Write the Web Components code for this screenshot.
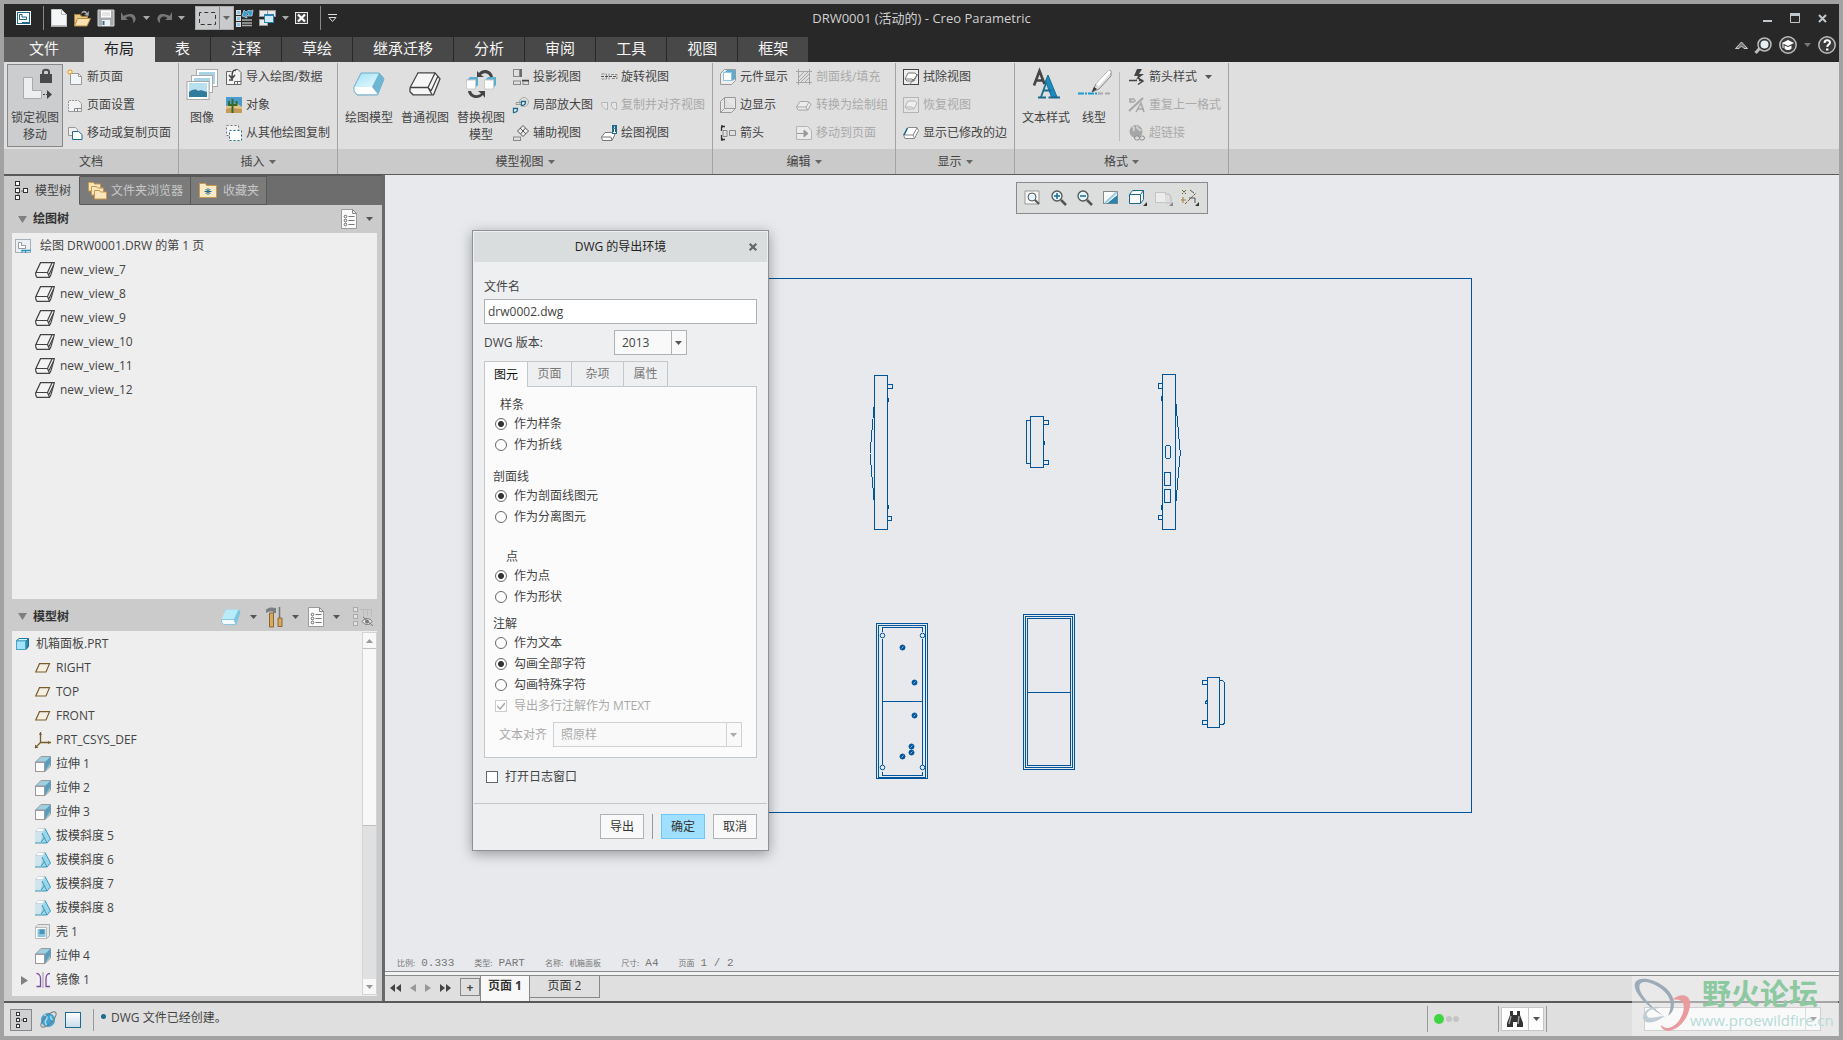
<!DOCTYPE html>
<html lang="zh-CN">
<head>
<meta charset="utf-8">
<title>DRW0001 (活动的) - Creo Parametric</title>
<style>
html,body{height:100%;margin:0}
body{font:12px/16px "Open Sans","Noto Sans CJK SC",sans-serif;color:#444;background:#a2a2a2}
</style>
</head>
<body>
<creo-app></creo-app>
<script>
const BASE = `:host,*{box-sizing:border-box}button{font:inherit;color:inherit;background:none;border:0;padding:0;margin:0;cursor:default}`;

/* name: [width, height, markup] */
const ICONS = {
  caret:[7,4,`<path d="M0 0h7L3.500 4z" fill="currentColor"/>`],
  caretup:[7,4,`<path d="M0 4h7L3.500 0z" fill="currentColor"/>`],
  tri:[9,7,`<path d="M0 0h9L4.500 7z" fill="#808080"/>`],
  triright:[7,9,`<path d="M0 0v9L7 4.500z" fill="#808080"/>`],
  app:[15,14,`<rect width="15" height="14" fill="#fff"/><rect x="1" y="1" width="13" height="12" fill="#1d6a8c"/><rect x="2" y="2" width="11" height="10" fill="#fff"/><path d="M3.500 3.500v5h7v-2.500h-4.500v-2.500z" fill="#fff" stroke="#1d6a8c"/><path d="M6 11.500h8M10 11v2" stroke="#1d6a8c"/>`],
  newdoc:[16,18,`<path d="M.5.500h10l5 5v12H.500z" fill="#f4f6f8" stroke="#c8c8c8"/><path d="M10.500.500v5h5z" fill="#fff" stroke="#bbb"/><path d="M1 17h14" stroke="#888"/>`],
  open:[18,18,`<path d="M1 17V5h6l2 2h6v3" fill="#c79a4c"/><path d="M1.500 16.500V5.500h5l2 2h6V16" fill="#e8c98a" stroke="#a88040"/><path d="M1.500 17l3-7.500h13L14 17z" fill="#fbe2b0" stroke="#b88c48"/><path d="M8 5c1-4 5-4 6-1l2-2-.5 5-4.500-1 2-1c-1-2-3-2-5 0" fill="#aaa"/>`],
  save:[18,18,`<path d="M1 1h16v16H1z" fill="#a8abae" stroke="#d4d4d4"/><rect x="4" y="1.500" width="10" height="7" fill="#fff"/><rect x="5" y="11" width="8" height="6" fill="#eef0f2"/><path d="M6.500 12v4" stroke="#3a7090" stroke-width="2"/><path d="M5 4h8M5 6h8" stroke="#ccc"/>`],
  undo:[16,12,`<path d="M0 0v8h7L4.500 6c4-3 8.500-1 7.500 5l-2 1c7-2 5.500-10-.500-10C6 2 4 3 2.500 4z" fill="#777"/>`],
  redo:[16,12,`<path d="M16 0v8H9l2.500-2C7.500 3 3 5 4 11l2 1C-1 10 .5 2 6.500 2 10 2 12 3 13.500 4z" fill="#777"/>`],
  select:[17,13,`<rect x=".5" y=".5" width="16" height="12" fill="none" stroke="#333" stroke-dasharray="4 2.800" stroke-dashoffset="2"/>`],
  regen:[17,18,`<g fill="#8cc8e8" stroke="#ddd"><rect x=".5" y="1.500" width="4" height="4"/><rect x=".5" y="7.500" width="4" height="4"/><rect x=".5" y="13.500" width="4" height="4"/></g><path d="M6 11h10M6 14h10M6 16.500h10" stroke="#aaa" stroke-width="1.500"/><path d="M6 7l2-6 2 2c2-2 4-2 5-1l2-1-1 6h-5l2-2c-1-1-2 0-3 1l1 3z" fill="#3a9cc8" stroke="#c8e0ec" stroke-width=".7"/>`],
  wins:[17,18,`<g fill="#e8e8e8" stroke="#999"><rect x=".5" y="1.500" width="8" height="6"/><rect x="8.500" y="1.500" width="8" height="6"/><rect x=".5" y="10.500" width="8" height="6"/></g><rect x="5.500" y="5.500" width="9" height="8" fill="#cfe9f6" stroke="#2c84ac"/><path d="M6 6.500h8" stroke="#2c84ac"/>`],
  closew:[13,12,`<rect x=".5" y=".5" width="12" height="11" fill="#444" stroke="#e8e8e8"/><path d="M3 2.500l7 7M10 2.500l-7 7" stroke="#fff" stroke-width="2.200"/>`],
  custom:[9,8,`<path d="M0 .5h9" stroke="#ddd"/><path d="M1 3.500h7L4.500 7.500z" fill="none" stroke="#ddd"/>`],
  min:[9,10,`<path d="M0 8h9" stroke="#c0c8cc" stroke-width="2"/>`],
  max:[10,10,`<path d="M.5 1v8.500h9V1" fill="none" stroke="#c0c8cc"/><path d="M0 1.500h10" stroke="#c0c8cc" stroke-width="3"/>`],
  close:[9,9,`<path d="M1 1l7 7M8 1L1 8" stroke="#c0c8cc" stroke-width="2"/>`],
  chev:[13,9,`<path d="M.5 7.500L6.500 1l6 6.500H9L6.500 5 4 7.500z" fill="#777" stroke="#ccc"/>`],
  search:[17,17,`<path d="M5 11l-4.500 5" stroke="#bbb" stroke-width="3"/><circle cx="9.500" cy="7.500" r="6.500" fill="#333" stroke="#bbb" stroke-width="1.500"/><circle cx="9.500" cy="7.500" r="4" fill="#e4f0f6"/>`],
  hat:[18,18,`<circle cx="9" cy="9" r="8.200" fill="#3c3c3c" stroke="#bbb" stroke-width="1.500"/><path d="M3 7l6-3 6 3-6 3z" fill="#fff"/><path d="M5.500 9.500v3c2 2 5 2 7 0v-3L9 11z" fill="#fff"/><path d="M4 7v5" stroke="#fff"/>`],
  help:[18,18,`<circle cx="9" cy="9" r="8.200" fill="#3c3c3c" stroke="#bbb" stroke-width="1.500"/><path d="M6.500 7c0-3.500 5.500-3.500 5.500-.5C12 8.500 9.200 8.500 9.200 11" fill="none" stroke="#fff" stroke-width="2"/><path d="M8 12.500h2.400v2H8z" fill="#fff"/>`],
  lock:[32,32,`<path d="M4.500 9.500h9v13h9v8h-18z" fill="#eceeef" stroke="#aaa"/><path d="M24 26.500h5" stroke="#444" stroke-dasharray="2 1"/><path d="M28 22l5 4.500-5 4.500z" fill="#444"/><rect x="21" y="6" width="12" height="9" fill="#4a4a4a"/><path d="M24 6V4c0-3 6-3 6 0v2" fill="none" stroke="#4a4a4a" stroke-width="2"/>`],
  newpage:[16,16,`<path d="M3.500 4.500h8l3 3v8h-11z" fill="#f2f5f8" stroke="#999"/><path d="M11.500 4.500v3h3z" fill="#fff" stroke="#999"/><path d="M3 0v6M0 3h6M1 1l4 4M5 1L1 5" stroke="#f0961e"/><circle cx="3" cy="3" r="1.200" fill="#fff3b0"/>`],
  pagesetup:[16,16,`<path d="M1.500 3.500h10l3 3v8h-13z" fill="#f0f2f4" stroke="#999"/><path d="M1.500 3v12M1 3.500h10" stroke="#dfdfdf" stroke-dasharray="1 2"/><path d="M7.500 14.500v-3h7M10.500 12v3" fill="none" stroke="#888"/>`],
  movepage:[16,16,`<path d="M1.500 2.500h7l2 2v6h-9z" fill="#eee" stroke="#999"/><path d="M5.500 6.500h6l3.500 3v5H5.500z" fill="#fff" stroke="#1d6a8c"/>`],
  images:[33,32,`<g stroke="#aaa" fill="#fff"><rect x="10.500" y="1.500" width="21" height="17"/><rect x="13" y="4" width="16" height="12" fill="#a9d2e4" stroke="none"/><rect x="5.500" y="7.500" width="21" height="17"/><rect x="8" y="10" width="16" height="12" fill="#a9d2e4" stroke="none"/><rect x="1" y="13.500" width="22" height="18"/></g><rect x="3" y="15" width="18" height="14" fill="#b9e0ee"/><path d="M3 24c4-3 7-3 9-1 3-2 6 0 9 1v5H3z" fill="#2f7c9c"/>`],
  importd:[16,16,`<path d="M.5 2.500h5M9 .5h3l3 3v12H.500v-13" fill="#f3f3f3" stroke="#666"/><path d="M10 1.500c-3-1-4 1-4 7M3 6l3 3.500L9 6M3 11h4" fill="none" stroke="#444" stroke-width="1.500"/><path d="M8.500 15v-2.500H15M11.500 13v2" fill="none" stroke="#666"/>`],
  object:[16,16,`<rect width="16" height="16" fill="#4a9ccc"/><path d="M0 9l6-1 4-2 6 4v6H0z" fill="#e2c48a"/><path d="M0 12c5-2 10 0 16 0v4H0z" fill="#c49a58"/><path d="M6.500 2v14M3 4v4h3M10.500 4v4H7" fill="none" stroke="#356a2c" stroke-width="2"/>`],
  copyfrom:[16,16,`<rect x=".5" y=".5" width="12" height="10" fill="#f3f3f3" stroke="#777" stroke-dasharray="2 2"/><rect x="3.500" y="5.500" width="12" height="10" fill="#fff" stroke="#1d6a8c" stroke-dasharray="2 2"/>`],
  cube:[32,24,`<defs><linearGradient id="a" x2="1" y2="1"><stop stop-color="#9fe0f4"/><stop offset="1" stop-color="#e8faff"/></linearGradient></defs><path d="M8 1h18L19 15H1z" fill="url(#a)"/><path d="M26 1l5 5-6 16-6-7z" fill="#6fb6d4"/><path d="M1 15h18l5 7H4l-3-3z" fill="#fff"/><path d="M8 1h18l5 6-6.500 16H4l-3-4v-4z" fill="none" stroke="#6aaccb"/>`],
  wirecube:[32,24,`<path d="M9 .8h17l5 6-6.500 16H4l-3-3v-4z" fill="#f6f6f6" stroke="#444" stroke-width="1.300"/><path d="M1 15.500h18l4 7M19 15.500L26 1M22 19L29 4M19 15.500l3 3.500" fill="none" stroke="#444" stroke-width="1.300"/>`],
  replace:[32,32,`<path d="M28 9C27 1 17 0 14 5l-2-2v6h7l-3-2c3-3 8-2 9 2zM3 23c1 8 11 9 15 4l2 3v-7h-7l3 2.500c-3 3-9 2-10-2.500z" fill="#444"/><path d="M2 12l3-3h8v8l-3 3H2z" fill="#5cacd0"/><rect x="1.500" y="12" width="9" height="9" fill="#fff" stroke="#ccc"/><path d="M20 12l3-3h8v8l-3 3h-8z" fill="#5cacd0"/><rect x="19.500" y="12" width="9" height="9" fill="#fff" stroke="#ccc"/>`],
  proj:[16,16,`<g fill="none" stroke="#888"><rect x=".5" y=".5" width="6" height="7"/><rect x=".5" y="12" width="7" height="3.500"/><rect x="10" y="12" width="5.500" height="3.500"/></g><path d="M8 0v8M9 11.500h7" stroke="#444" stroke-width="1.500"/>`],
  detail:[16,16,`<circle cx="11" cy="5" r="4.500" fill="none" stroke="#aaa"/><path d="M3 5.500h8v2H3z" fill="none" stroke="#999"/><path d="M8.500 4.500h4c0 3-2 4-4 4zM.5 11.500h4c0 3-2 4-4 4z" fill="#fff" stroke="#1d6a8c" stroke-width="1.300"/>`],
  aux:[16,16,`<path d="M10 .5l5.500 5.500L10 11.500 4.500 6z" fill="#eee" stroke="#555"/><path d="M7 3l6 6M12.500 3l-5 6" stroke="#555"/><rect x=".5" y="12" width="7" height="3.500" fill="none" stroke="#888"/>`],
  rot:[16,16,`<path d="M0 7.500h16" stroke="#555" stroke-dasharray="3 1"/><path d="M.5 5h5v5h-5M8 4.500v6M10 5.500h6v4h-6" fill="none" stroke="#888" stroke-dasharray="3 1"/>`],
  copyalign:[16,16,`<path d="M.5 5.500h6v7c-3 0-6-3-6-7zM15.500 5.500h-5v3c1 3 3 4 5 4z" fill="#e8e8e8" stroke="#aaa"/>`],
  drwview:[16,16,`<path d="M4 7.500h7l3 2-3 6H1.500L.5 12z" fill="#fff" stroke="#777"/><path d="M1 12h9l1 3" fill="none" stroke="#777"/><rect x="11" y="0" width="5" height="9" fill="#1d6a8c"/><path d="M13.500 1.500v1.300M12.500 4h1v3.500M12 7.500h3" stroke="#fff"/>`],
  comp:[16,16,`<path d="M.5 4.500l4-4h11v11l-4 4H.5z" fill="#eee" stroke="#999"/><path d="M4 4l3-3h8v9l-3 2z" fill="#5cacd0"/><rect x="3.500" y="3.500" width="8" height="8" fill="#fff" stroke="#8cc8e0"/>`],
  edge:[16,16,`<path d="M.5 4.500l4-4h11v11l-4 4H.500zM4.500 1v10.500h11M4.500 11.500l-4 4" fill="#e6e6e6" stroke="#999"/>`],
  arr:[16,16,`<path d="M5 1.500H1M1 14.500h4M2 0v3M2 13v3M1.500 2v4M1.500 10v5" stroke="#333" stroke-width="1.300"/><path d="M3 5.500h4v6H3zM9.500 5.500h6v5h-6z" fill="none" stroke="#888"/>`],
  hatch:[16,16,`<path d="M2.500 0v16M13.500 0v16M0 2.500h16M0 13.500h16M3 8l5-5M3 12l9-9M5 13l8-8M9 13l4-4" fill="none" stroke="#999"/>`],
  todraft:[16,16,`<path d="M4 4.500h8l3 2.500-3 6H2L.5 10z" fill="#f0f0f0" stroke="#999"/><path d="M1 10h9l1.500 3M10 10l3-5" fill="none" stroke="#999"/>`],
  topage:[16,16,`<path d="M.5 1.500h11l4 4v9H.5z" fill="#eee" stroke="#aaa"/><path d="M1 8.500h8M8 5l4 3.500L8 12z" stroke="#888" fill="#888"/>`],
  erase:[16,16,`<rect x=".5" y=".5" width="15" height="15" fill="#eee" stroke="#444"/><path d="M5 4h7l2 2-3 6H4l-2-2z" fill="#fff" stroke="#777"/><path d="M2 10h7l2 2M6 16L16 4" fill="none" stroke="#777"/>`],
  resume:[16,16,`<rect x=".5" y=".5" width="15" height="15" fill="#e6e6e6" stroke="#aaa"/><path d="M5 4h7l2 2-3 6H4l-2-2z" fill="#f4f4f4" stroke="#aaa"/><path d="M2 10h7l2 2" fill="none" stroke="#aaa"/>`],
  showedge:[16,16,`<path d="M5 2.500h9l1.500 3-4 8H2L.5 10z" fill="#fff" stroke="#888"/><path d="M1 10h9l1.500 3M10 10l4-7" fill="none" stroke="#888"/><path d="M4.500 3l-3.500 7" stroke="#1d6a8c" stroke-width="1.500"/>`],
  aa:[32,32,`<path d="M4 17.500L9.500 3l5 13M6 12.500h7" fill="none" stroke="#444" stroke-width="2.600"/><path d="M11 29L17.500 11" stroke="#1b6a90" stroke-width="1.800"/><path d="M18 7l9 22h-5.500L15.500 13z" fill="#1b8cc0" stroke="#1b6a90"/><path d="M8 29.500h8M18.500 29.500H30M13.500 22.500h8" stroke="#1b6a90" stroke-width="2"/>`],
  pen:[33,32,`<path d="M14 24l4-8L31 2l2 1v5L21 21z" fill="#ddd" stroke="#888"/><path d="M18 16L31 2l2 2-12 14z" fill="#fff"/><path d="M14 24l2-5 3 2z" fill="#333"/><path d="M0 25.500h21" stroke="#1b9ad0" stroke-width="2" stroke-dasharray="6 1 2 1"/><path d="M20 25.500h13" stroke="#aaa" stroke-width="2" stroke-dasharray="5 2"/>`],
  arrstyle:[16,16,`<path d="M8 0h5l-3 5h5l-8 6 2-4H5z" fill="#444"/><path d="M0 11.500h8M9 9l5 3-5 3.500M10 11.500h4" fill="none" stroke="#444" stroke-width="1.500"/>`],
  repfmt:[16,16,`<path d="M0 14L14 1" stroke="#999" stroke-width="2"/><path d="M1 1v4h4M1 4c3-4 5-2 5 1M7 15l5-9 3 9M8 12h7" fill="none" stroke="#999" stroke-width="1.500"/>`],
  link:[16,16,`<circle cx="7" cy="6.500" r="6.500" fill="#999"/><path d="M3 2c3 0 2 3 1 4M8 1c-1 3 3 3 4 5" stroke="#ccc" stroke-width="2" fill="none"/><rect x="5.500" y="11" width="5" height="4" rx="2" fill="#ddd" stroke="#777"/><rect x="10.500" y="11" width="5" height="4" rx="2" fill="#ddd" stroke="#777"/>`],
  tree:[14,20,`<path d="M3 3v14M3 10h8" stroke="#666" stroke-dasharray="2 1"/><g fill="#fff" stroke="#333"><rect x=".5" y=".5" width="4" height="4"/><rect x=".5" y="7.500" width="4" height="4"/><rect x=".5" y="14.500" width="4" height="4"/><rect x="8.500" y="7.500" width="4" height="4"/></g>`],
  treesm:[11,16,`<path d="M2 2v12M2 8h7" stroke="#666" stroke-dasharray="2 1"/><g fill="#fff" stroke="#333"><rect x=".5" y=".5" width="3" height="3"/><rect x=".5" y="6.500" width="3" height="3"/><rect x=".5" y="12.500" width="3" height="3"/><rect x="7.500" y="6.500" width="3" height="3"/></g>`],
  folders:[19,19,`<g fill="#fae6bc" stroke="#c9984c"><path d="M.5 10V1.500h5l1 1.500h6v7z"/><path d="M3.500 14V5.500h5l1 1.500h6v7z"/><path d="M6.500 18V9.500h5l1 1.500h6v7z"/></g>`],
  fav:[18,15,`<path d="M.5 14.500v-14h6l1 2h10v12z" fill="#fbeac6" stroke="#c9984c"/><path d="M9 5v7M5.500 8.500h7M6.500 6l5 5M11.500 6l-5 5" stroke="#1d6a8c"/>`],
  listdoc:[16,20,`<path d="M.5.500h11l4 4v15H.500z" fill="#fafafa" stroke="#9a9a9a"/><path d="M11.500.500v4h4z" fill="#eee" stroke="#888"/><g fill="#fff" stroke="#666"><circle cx="4.500" cy="7.500" r="1.300"/><circle cx="4.500" cy="11.500" r="1.300"/><circle cx="4.500" cy="15.500" r="1.300"/></g><path d="M7.500 7.500h6M7.500 11.500h6M7.500 15.500h6" stroke="#777"/>`],
  bluecube:[20,16,`<path d="M5 .5h12.500l2 2.500-4 12.500H2.500L.500 12z" fill="#7cc6e2"/><path d="M5 .5h12.500L13 10H.500z" fill="#b8ecfa"/><path d="M.5 10.500H13l2 5H2.500L.500 13z" fill="#f4fcff" stroke="#8cc8de"/>`],
  tools:[17,20,`<path d="M0 2.500C3 0 6 0 10 1v5H7V4.500H3L0 6z" fill="#7c7f82"/><path d="M3.500 6h4v14h-4z" fill="#d9a95c" stroke="#8c6630"/><path d="M13.500 0v11" stroke="#777" stroke-width="1.500"/><path d="M12 11h4v8.500h-4z" fill="#d9a95c" stroke="#8c6630"/>`],
  treehide:[24,20,`<g fill="#e2e2e2" stroke="#aaa"><rect x="4.500" y=".5" width="4" height="4"/><rect x="4.500" y="7.500" width="4" height="4"/><rect x="4.500" y="14.500" width="4" height="4"/></g><path d="M11 2.500h12M14.500 2v9M18.500 2v7M22.500 2v8" stroke="#bbb"/><path d="M13 14.500c3-4 8-4 10 0-2 4-7 4-10 0z" fill="#e6e6e6" stroke="#777"/><circle cx="18" cy="14.500" r="2" fill="#777"/><path d="M14 10l10 9" stroke="#777"/>`],
  drwroot:[20,15,`<rect x=".5" y=".5" width="15" height="13" fill="#e8f0f6" stroke="#a8b0b8"/><path d="M3.500 3.500v6h7v-3h-4v-3z" fill="#fff" stroke="#999"/><path d="M7 13.500v-2h9M10.500 12v2" fill="none" stroke="#2c94c4" stroke-width="1.300"/>`],
  view:[20,16,`<path d="M5.500.700h13.800L16 12.500 14.500 15.300H2L.7 13V11z" fill="#f4f4f4" stroke="#444" stroke-width="1.200"/><path d="M.7 10.500h11.800l2 4.800M12.500 10.500L17 .7M14 12.500l4.500-9" fill="none" stroke="#444" stroke-width="1.200"/>`],
  part:[16,12,`<path d="M1.500 3l2.500-2.500h9.500v8L11 11.500z" fill="#2c8cb4" stroke="#1d6a8c"/><path d="M1.500 3L4 .5h9.500L11 3z" fill="#d8f4fc" stroke="#1d7ca4"/><rect x="1.500" y="3" width="9" height="8.500" fill="#a4e4f8" stroke="#4aa4c8"/>`],
  plane:[16,10,`<path d="M4.500.700h10L11 9H.800z" fill="#f6f0e4" stroke="#7a5c2c" stroke-width="1.200"/>`],
  csys:[16,16,`<path d="M5.500 0v10.500H16M5.500 10.500L0 16" fill="none" stroke="#7a5c2c" stroke-width="1.300"/><path d="M4 3l1.500-3L7 3zM13 9l3 1.500-3 1.500zM0 12.500V16h3.500z" fill="#7a5c2c"/>`],
  extrude:[16,16,`<path d="M.5 6L6 .5h9.500v9.500L10 15.500V6z" fill="#9cd0e4" stroke="#999"/><path d="M10 6L15.500.5V7L10 15z" fill="#5a9cbc"/><rect x=".5" y="6.500" width="9" height="9" fill="#fdfdfd" stroke="#999"/>`],
  draft:[16,16,`<path d="M0 3.500L3.500.500H10L7 3.500z" fill="#fff" stroke="#b4c8d0" stroke-width=".7"/><path d="M0 4h7v11H0z" fill="#cfe4ec"/><path d="M7 5l3-4.500L15.500 11 12 15H6z" fill="#9cd8ec"/><path d="M7 5l5 10M10 .5L15.500 11 12 15" stroke="#3c94b8" fill="none"/><path d="M6 14l4-5M0 15h12" stroke="#3c94b8" fill="none"/>`],
  shell:[16,16,`<path d="M.5 3L3 .5h11.500v11L12 14.500H.500z" fill="#e4e8ea" stroke="#aaa"/><rect x=".5" y="3.500" width="11" height="11" fill="#fff" stroke="#bbb"/><rect x="2.500" y="5" width="8" height="8" fill="#8cc8e0"/><rect x="4.500" y="5.500" width="5" height="4.500" fill="#4a94b8"/>`],
  mirror:[16,16,`<path d="M8 0v16" stroke="#999"/><path d="M1.500 1.500c3 0 4 3 4 5v8h-4M15 1.500c-3 0-4 3-4 5v8h4" fill="#f4f0fa" stroke="#7c4a9c" stroke-width="1.300"/>`],
  zfit:[18,18,`<path d="M0 2h14v13H0z" fill="#f6f6f6" stroke="#999"/><circle cx="7" cy="8" r="4" fill="#e4f4fc" stroke="#555"/><path d="M10 11l4 4" stroke="#555" stroke-width="2"/>`],
  zin:[18,18,`<circle cx="6" cy="7" r="5" fill="#e4f4fc" stroke="#555" stroke-width="1.300"/><path d="M10 11l5 5" stroke="#555" stroke-width="2.500"/><path d="M3 7h6M6 4v6" stroke="#1d6a8c" stroke-width="1.500"/>`],
  zout:[18,18,`<circle cx="6" cy="7" r="5" fill="#e4f4fc" stroke="#555" stroke-width="1.300"/><path d="M10 11l5 5" stroke="#555" stroke-width="2.500"/><path d="M3 7h6" stroke="#1d6a8c" stroke-width="1.500"/>`],
  repaint:[18,18,`<rect x="0.500" y="2.500" width="14" height="12" fill="#f8fafc" stroke="#888"/><path d="M14.500 6v8.500H4z" fill="#2c84ac"/><path d="M2 14L14 3" stroke="#9ccbe0" stroke-width="2"/>`],
  dispcube:[18,18,`<path d="M.5 5.500l3-4h11v9l-3 4H.500z" fill="#fff" stroke="#1d6a8c"/><path d="M.5 5.500h11v9M11.500 5.500l3-4" fill="none" stroke="#1d6a8c"/><path d="M18 13v4h-4z" fill="#333"/>`],
  dispgray:[18,18,`<rect x=".5" y="3.500" width="10" height="10" fill="#ececec" stroke="#c4c4c4"/><path d="M10 5h4l2 3v6h-6" fill="#ddd" stroke="#bbb"/><path d="M18 13v4h-4z" fill="#888"/>`],
  datum:[18,18,`<path d="M1 1l4 4M5 1L1 5M4 15L15 4" stroke="#7a5c2c" stroke-dasharray="3 1"/><path d="M9 1l4 3M8 9h6v5" fill="none" stroke="#555"/><path d="M2 8v6M0 11h5" stroke="#a07c3c"/><path d="M18 13v4h-4z" fill="#333"/>`],
  navfirst:[11,8,`<path d="M5 0v8L0 4zM11 0v8L6 4z" fill="#444"/>`],
  navprev:[6,8,`<path d="M6 0v8L0 4z" fill="#999"/>`],
  navnext:[6,8,`<path d="M0 0v8l6-4z" fill="#999"/>`],
  navlast:[11,8,`<path d="M0 0v8l5-4zM6 0v8l5-4z" fill="#444"/>`],
  globe:[17,17,`<circle cx="8" cy="9" r="7" fill="#3ca4d4"/><path d="M4 4c3 0 4 3 2 5s0 4 1 6M11 5c-1 2 1 4 3 4" stroke="#a4dcf2" stroke-width="1.500" fill="none"/><ellipse cx="8.500" cy="8.500" rx="10" ry="4" transform="rotate(-45 8.500 8.500)" fill="none" stroke="#777"/>`],
  square:[16,16,`<defs><linearGradient id="s" x2="0" y2="1"><stop stop-color="#fff"/><stop offset="1" stop-color="#c8dce8"/></linearGradient></defs><rect x=".5" y=".5" width="15" height="15" fill="url(#s)" stroke="#1d6a8c"/>`],
  binoc:[16,16,`<path d="M3 0h3v4h4V0h3v4l3 8v4h-6v-5H6v5H0v-4l3-8z" fill="#333"/><path d="M4 5l-2 8M12 5l-1 8" stroke="#999" stroke-width="1.500"/>`],
  dlgclose:[8,8,`<path d="M.7.700l6.600 6.600M7.300.700L.700 7.300" stroke="#666" stroke-width="2.200"/>`]
};

const def = (tag, css, html) => customElements.define(tag, class extends HTMLElement {
  constructor(){ super(); this.attachShadow({mode:'open'}); }
  connectedCallback(){
    const h = typeof html === 'function' ? html(this) : html;
    this.shadowRoot.innerHTML = `<style>${BASE}${css}</style>${h}`;
  }
});
const ic = n => `<cx-icon name="${n}"></cx-icon>`;

def('cx-icon', `:host{display:block;flex:none}svg{display:block;overflow:visible}`, el => {
  const [w,h,m] = ICONS[el.getAttribute('name')];
  return `<svg width="${w}" height="${h}" viewBox="0 0 ${w} ${h}" aria-hidden="true">${m}</svg>`;
});

def('title-bar', `
:host{display:grid;grid-template-columns:1fr auto 1fr;align-items:center;height:33px;padding-bottom:5px;background:#282828;color:#d0d0d0}
.quick{display:flex;align-items:center;gap:6px;padding-left:12px;height:24px}
.quick button{display:block;color:#aaa}
.sep{width:1px;height:24px;background:#888;margin:0 1px 0 6px}
.split{display:flex;height:24px;background:#c8cacc;border:1px solid #aaa;align-items:center;margin:0 -4px 0 4px}
.split button{height:22px;display:grid;place-items:center;padding:0 3px;color:#666}
.split button+button{border-left:1px solid #888}
h1{font-size:13px;font-weight:400;line-height:20px;margin:0}
.win{display:flex;justify-content:flex-end;align-items:center;gap:18px;padding-right:12px}
`, `<div class="quick"><button aria-label="Creo">${ic('app')}</button><span class="sep"></span>
<button aria-label="新建">${ic('newdoc')}</button><button aria-label="打开">${ic('open')}</button><button aria-label="保存">${ic('save')}</button>
<button aria-label="撤消">${ic('undo')}</button><button aria-label="撤消列表">${ic('caret')}</button><button aria-label="重做">${ic('redo')}</button><button aria-label="重做列表">${ic('caret')}</button>
<span class="split"><button aria-label="选择">${ic('select')}</button><button aria-label="选择列表">${ic('caret')}</button></span>
<button aria-label="重新生成">${ic('regen')}</button><button aria-label="窗口">${ic('wins')}</button><button aria-label="窗口列表">${ic('caret')}</button><button aria-label="关闭窗口">${ic('closew')}</button><span class="sep"></span><button aria-label="自定义">${ic('custom')}</button></div>
<h1>DRW0001 (活动的) - Creo Parametric</h1>
<div class="win"><button aria-label="最小化">${ic('min')}</button><button aria-label="最大化">${ic('max')}</button><button aria-label="关闭">${ic('close')}</button></div>`);

def('ribbon-tabs', `
:host{display:flex;height:25px;background:#282828;justify-content:space-between}
nav{display:flex}
nav button{font-size:15px;line-height:22px;color:#f4f4f4;background:#484848;padding:0 20px 3px;border-right:1px solid #282828}
nav .file{background:#636363;padding:0 25px 3px;border:0}
nav .on{background:#dfdfdf;color:#222;border-color:#dfdfdf}
.tools{display:flex;align-items:center;gap:7px;padding:0 3px 9px 0;color:#777}
`, `<nav><button class="file">文件</button><button class="on">布局</button>${['表','注释','草绘','继承迁移','分析','审阅','工具','视图','框架'].map(t=>`<button>${t}</button>`).join('')}</nav>
<div class="tools"><button aria-label="折叠功能区">${ic('chev')}</button><button aria-label="搜索">${ic('search')}</button><button aria-label="学习">${ic('hat')}</button>${ic('caret')}<button aria-label="帮助">${ic('help')}</button></div>`);

def('ribbon-button', `
:host{display:block}
button{display:flex;align-items:center;gap:4px;height:28px;white-space:nowrap;line-height:16px}
button cx-icon{width:16px}
:host([off]) button{color:#aaa}
:host([off]) cx-icon{opacity:.8}
.m{margin-left:4px;color:#555;width:7px}
:host([big]) button{flex-direction:column;gap:0;width:56px;height:83px;margin-top:1px;padding-top:3px;border:1px solid transparent;line-height:17px;text-align:center}
:host([big]) .i{width:auto;height:32px;display:grid;place-items:center;margin-bottom:9px}
:host([big]) cx-icon{width:auto}
:host([narrow]) button{width:40px}
:host([pressed]) button{background:#cbcdcf;border-color:#888}
`, el => `<button><span class="i">${ic(el.getAttribute('icon'))}</span><span>${el.getAttribute('label').replace('|','<br>')}</span>${el.hasAttribute('menu')?`<cx-icon class="m" name="caret"></cx-icon>`:''}</button>`);

def('ribbon-group', `
:host{display:flex;flex-direction:column;border-right:1px solid #a3a3a3}
.body{display:flex;padding:0 3px;height:86px}
footer{height:25px;background:#cacaca;display:flex;justify-content:center;align-items:center;gap:4px;color:#444}
footer cx-icon{color:#666}
::slotted(.col){margin:0 4px;flex:none}
::slotted(.rule){width:1px;background:#bbb;margin:9px 5px 8px}
`, el => `<div class="body"><slot></slot></div><footer><span>${el.getAttribute('label')}</span>${el.hasAttribute('menu')?ic('caret'):''}</footer>`);

const rb = (i,l,a='') => `<ribbon-button icon="${i}" label="${l}" ${a}></ribbon-button>`;
def('cx-ribbon', `
:host{display:flex;height:113px;padding-top:1px;background:linear-gradient(#dfdfdf 87px,#cacaca 87px);border-bottom:1px solid #595959}
`, `
<ribbon-group label="文档">${rb('lock','锁定视图|移动','big pressed')}<div class="col">${rb('newpage','新页面')}${rb('pagesetup','页面设置')}${rb('movepage','移动或复制页面')}</div></ribbon-group>
<ribbon-group label="插入" menu>${rb('images','图像','big narrow')}<div class="col">${rb('importd','导入绘图/数据')}${rb('object','对象')}${rb('copyfrom','从其他绘图复制')}</div></ribbon-group>
<ribbon-group label="模型视图" menu>${rb('cube','绘图模型','big')}${rb('wirecube','普通视图','big')}${rb('replace','替换视图|模型','big')}<div class="col">${rb('proj','投影视图')}${rb('detail','局部放大图')}${rb('aux','辅助视图')}</div><div class="col">${rb('rot','旋转视图')}${rb('copyalign','复制并对齐视图','off')}${rb('drwview','绘图视图')}</div></ribbon-group>
<ribbon-group label="编辑" menu><div class="col">${rb('comp','元件显示')}${rb('edge','边显示')}${rb('arr','箭头')}</div><div class="col">${rb('hatch','剖面线/填充','off')}${rb('todraft','转换为绘制组','off')}${rb('topage','移动到页面','off')}</div></ribbon-group>
<ribbon-group label="显示" menu><div class="col">${rb('erase','拭除视图')}${rb('resume','恢复视图','off')}${rb('showedge','显示已修改的边')}</div></ribbon-group>
<ribbon-group label="格式" menu>${rb('aa','文本样式','big')}${rb('pen','线型','big narrow')}<div class="rule"></div><div class="col">${rb('arrstyle','箭头样式','menu')}${rb('repfmt','重复上一格式','off')}${rb('link','超链接','off')}</div></ribbon-group>`);

def('tree-item', `
:host{display:flex;align-items:center;height:24px;padding-left:3px;gap:5px}
:host([sub]){padding-left:23px}
:host([open]){padding-left:9px;gap:7px}
:host([open]) .l{margin-left:-2px}
`, el => `${el.hasAttribute('open')?ic('triright'):''}${ic(el.getAttribute('icon'))}<span class="l"><slot></slot></span>`);

def('tree-section', `
:host{display:flex;flex-direction:column;min-height:0}
header{display:flex;align-items:center;gap:9px;height:28px;padding:0 9px 0 14px;color:#555}
:host([scroll]) header{height:32px;padding-top:3px}
h2{font-size:12px;line-height:16px;color:#333;margin:0 auto 0 -3px}
.box{flex:1;margin:0 5px 0 8px;background:#eee;display:flex;min-height:0;overflow:hidden}
.items{flex:1;padding-top:1px}
.bar{width:15px;background:#dfe0e2;display:flex;flex-direction:column;border:1px solid #d4d4d4;margin:1px 0}
.bar button{height:15px;background:#f8f8f8;display:grid;place-items:center;color:#999}
.thumb{height:178px;background:#f8f8f8;border:1px solid #c0c0c0;border-width:1px 0}
.fill{flex:1}
`, el => `<header>${ic('tri')}<h2>${el.getAttribute('label')}</h2><slot name="tools"></slot></header><div class="box"><div class="items" role="tree"><slot></slot></div>${el.hasAttribute('scroll')?`<div class="bar"><button aria-label="向上">${ic('caretup')}</button><div class="thumb"></div><div class="fill"></div><button aria-label="向下">${ic('caret')}</button></div>`:''}</div>`);

const ti = (i,l,a='sub') => `<tree-item role="treeitem" icon="${i}" ${a}>${l}</tree-item>`;
def('side-panel', `
:host{display:flex;flex-direction:column;width:381px;background:#cbcbcb;border-right:3px solid #6a6a6a;padding-bottom:5px}
nav{display:flex;height:30px;background:#6d6d6d;border-top:1px solid #595959}
nav button{display:flex;align-items:center;color:#c8c8c8;background:#7b7b7b;border:1px solid #595959;border-width:1px 1px 1px 0;gap:4px;padding:0 7px 0 8px}
nav .on{background:#cbcbcb;color:#444;border-color:#cbcbcb #595959 #cbcbcb #cbcbcb;gap:6px;padding:0 8px 0 11px}
nav .fav{gap:6px}
.top{height:394px}
.bot{flex:1}
`, `<nav><button class="on">${ic('tree')}模型树</button><button>${ic('folders')}文件夹浏览器</button><button class="fav">${ic('fav')}收藏夹</button></nav>
<tree-section class="top" label="绘图树"><cx-icon slot="tools" name="listdoc"></cx-icon><cx-icon slot="tools" name="caret"></cx-icon>
${ti('drwroot','绘图 DRW0001.DRW 的第 1 页','')}${[7,8,9,10,11,12].map(n=>ti('view','new_view_'+n)).join('')}</tree-section>
<tree-section class="bot" label="模型树" scroll>${['bluecube','caret','tools','caret','listdoc','caret','treehide'].map(n=>`<cx-icon slot="tools" name="${n}"></cx-icon>`).join('')}
${ti('part','机箱面板.PRT','')}${ti('plane','RIGHT')}${ti('plane','TOP')}${ti('plane','FRONT')}${ti('csys','PRT_CSYS_DEF')}${ti('extrude','拉伸 1')}${ti('extrude','拉伸 2')}${ti('extrude','拉伸 3')}${[5,6,7,8].map(n=>ti('draft','拔模斜度 '+n)).join('')}${ti('shell','壳 1')}${ti('extrude','拉伸 4')}${ti('mirror','镜像 1','open')}</tree-section>`);

const screw = (x,y) => `<circle cx="${x}" cy="${y}" r="2.500" fill="#00549c"/><path d="M${x-1} ${y+1}l2-2" stroke="#c8d8ea" stroke-width=".8"/>`;
const ring = (x,y) => `<circle cx="${x}" cy="${y}" r="2.300"/>`;
def('drawing-canvas', `
:host{display:block;position:relative;flex:1;background:#e8e9ed;overflow:hidden;min-height:0}
svg.d{position:absolute;left:0;top:0;width:100%;height:100%}
.view{position:absolute;left:631px;top:7px;display:flex;align-items:center;gap:8px;height:32px;padding:0 8px;background:#dcdddd;border:1px solid #8a8a8a}
.view button{display:block}
p{position:absolute;left:12px;bottom:0;margin:0;display:flex;gap:20px;font:11px/16px "Liberation Mono",monospace;color:#777}
p span{display:flex;gap:6px;align-items:center}
p i{font:8px/16px "Noto Sans CJK SC",sans-serif}
`, `<svg class="d" role="img" aria-label="工程图"><g transform="translate(-384.500 -174.500)" fill="none" stroke="#00549c" shape-rendering="crispEdges">
<rect x="600" y="278" width="871" height="534"/>
<rect x="874" y="375" width="13" height="154"/><path d="M887 384h5v4h-5M887 516h4v4h-4M888 397v4M888 504v4"/><path d="M873 406v11M872 418v11M871 429v12M870 441v11M869 452h1M870 453v11M871 464v12M872 476v11M873 487v12"/>
<rect x="1030" y="416" width="13" height="51"/><path d="M1030 420h-4v43h4M1043 420h5v4h-5M1043 460h5v4h-5M1044 440v4"/>
<rect x="1162" y="374" width="13" height="155"/><path d="M1162 383h-4v5h4M1162 515h-4v4h4M1161 395v5M1161 504v5M1176 403v12M1177 415v11M1178 426v12M1179 438v11M1180 449v6M1179 455v11M1178 466v11M1177 477v12M1176 489v11"/>
<rect x="1165" y="445" width="5" height="13" rx="2"/><rect x="1164" y="472" width="6" height="13" rx="1"/><rect x="1164" y="489" width="6" height="13" rx="1"/>
<rect x="876" y="623" width="51" height="155"/><rect x="878" y="625" width="47" height="152"/><path d="M882 701h40M882 631v-4h40v4M882 638v126M922 638v126M882 771v4h40v-4"/>
<g shape-rendering="auto">${ring(882,635)}${ring(922,635)}${ring(882,767)}${ring(922,767)}${screw(902,647)}${screw(914,682)}${screw(914,715)}${screw(911,746)}${screw(911,752)}${screw(902,756)}</g>
<rect x="1023" y="614" width="51" height="155"/><rect x="1025" y="616" width="47" height="151"/><rect x="1027" y="618" width="43" height="147"/><path d="M1027 692h43"/>
<rect x="1207" y="677" width="12" height="50"/><path d="M1219 680h3l2 2v41l-2 1h-3M1207 680h-5v4h5M1207 720h-5v4h5M1206 700l-1 2 1 2"/>
</g></svg>
<div class="view">${['zfit','zin','zout','repaint','dispcube','dispgray','datum'].map(n=>`<button aria-label="${n}">${ic(n)}</button>`).join('')}</div>
<p><span><i>比例:</i>0.333</span><span><i>类型:</i>PART</span><span><i>名称:</i><i>机箱面板</i></span><span><i>尺寸:</i>A4</span><span><i>页面</i>1 / 2</span></p>`);

def('page-tabs', `
:host{display:flex;align-items:stretch;height:30px;background:#dfdfdf;border-top:1px solid #8a8a92;box-shadow:inset 0 3px #f2f2f2,inset 0 4px #8a8a8a;padding-top:4px}
.nav{display:flex;align-items:center;gap:9px;padding:0 9px 2px 5px}
.plus{width:20px;height:18px;border:1px solid #888;margin:2px 0 0;line-height:15px;font-weight:700}
.t{width:70px;border:1px solid #888;border-width:0 1px 1px 0;height:22px;color:#333;padding-bottom:2px}
.t.on{width:50px;background:#f8f8f8;font-weight:700;height:25px;border-bottom:0;border-left:1px solid #888;padding-bottom:5px}
`, `<div class="nav"><button aria-label="首页">${ic('navfirst')}</button><button aria-label="上一页">${ic('navprev')}</button><button aria-label="下一页">${ic('navnext')}</button><button aria-label="末页">${ic('navlast')}</button></div><button class="plus">+</button><button class="t on">页面 1</button><button class="t">页面 2</button>`);

def('status-bar', `
:host{display:flex;align-items:center;height:35px;background:#dfdfdf;border-top:2px solid #595959;padding-left:6px}
.tree{width:22px;height:22px;border:1px solid #888;background:#cfd0d1;display:grid;place-items:center}
.l{display:flex;align-items:center;gap:8px}
.sep{width:1px;height:26px;background:#999}
.l .sep{height:22px;margin:0 -1px 0 4px}
.dot{width:5px;height:5px;border-radius:50%;background:#1d6a8c;margin-right:-3px}
.msg{padding-bottom:4px}
.l .dot{margin-bottom:7px}
.r{margin-left:auto;display:flex;align-items:center;padding-bottom:2px}
.led{display:flex;align-items:center;gap:1px;width:70px;padding-left:6px}
.led i{width:6px;height:6px;border-radius:50%;background:#c4c4c4}
.led i:first-child{width:10px;height:10px;background:#40d440;margin-right:1px}
.find,.combo{display:flex;height:24px;border:1px solid #c4c6c8;background:#fff;margin:0 2px}
.find button{width:26px;display:grid;place-items:center}
.find button+button,.combo b{width:15px;border-left:1px solid #c4c6c8;display:grid;place-items:center;color:#555}
.combo{width:177px;margin:0 18px 0 97px;border-color:#aaa}
select{appearance:none;border:0;background:none;flex:1;font:inherit}
`, `<div class="l"><button class="tree" aria-label="模型树">${ic('treesm')}</button><button aria-label="浏览器">${ic('globe')}</button><button aria-label="全屏">${ic('square')}</button><span class="sep"></span><span class="dot"></span><span class="msg">DWG 文件已经创建。</span></div>
<div class="r"><span class="sep"></span><span class="led"><i></i><i></i><i></i></span><span class="sep"></span><span class="find"><button aria-label="查找">${ic('binoc')}</button><button aria-label="查找列表">${ic('caret')}</button></span><span class="sep"></span><span class="combo"><select aria-label="过滤器"></select><b>${ic('caret')}</b></span></div>`);

def('water-mark', `
:host{display:flex;width:206px;height:60px;background:rgba(244,244,244,.5);pointer-events:none;align-items:center}
svg{flex:none;display:block}
.t{margin-left:-8px;white-space:nowrap;padding-bottom:8px}
.a{font:700 29px/36px "Noto Sans CJK SC",sans-serif;color:#8cc8a0;margin-left:12px}
.b{font:15px/20px "Open Sans",sans-serif;color:#b4dcd8}
`, `<svg width="66" height="60" viewBox="0 0 66 60"><path d="M32 40C20 34 0 18 3 7 8-4 40 8 42 26c0 8-2 11-6 14 3-8 4-13 0-20C30 10 12 2 8 8c-4 8 12 24 24 32z" fill="#9cabb8"/><path d="M31 32c-10-4-20 2-20 10 2 8 14 4 22-2-8 0-16 4-18 0-2-6 8-8 16-8z" fill="#c0ccd4"/><path d="M40 24c8-8 20-6 18 6-2 14-12 24-22 25-6-1-7-4-7-6 6 6 14 2 19-6 6-10 6-22-8-19z" fill="#e89ca0"/></svg><div class="t"><div class="a">野火论坛</div><div class="b">www.proewildfire.cn</div></div>`);

const radio = (g,l,c) => { const id=g+l; return `<div class="row"><input type="radio" name="${g}" id="${id}" ${c?'checked':''}><label for="${id}">${l}</label></div>`; };
def('export-dialog', `
:host{display:block;width:297px;border:1px solid #8f9193;background:#eeeff1;box-shadow:0 3px 12px rgba(0,0,0,.35)}
header{display:grid;grid-template-columns:28px 1fr 28px;align-items:center;height:30px;margin:1px;background:#dadddd;color:#222;text-align:center}
header button{display:grid;place-items:center}
.content{padding:16px 11px 0}
.name{display:block;line-height:16px;margin-bottom:4px}
input[type=text]{display:block;width:100%;height:25px;border:1px solid #b0b3b6;background:#fff;font:inherit;color:#444;padding:0 3px 1px;outline:0}
.ver{display:flex;align-items:center;margin-top:6px;height:25px}
.ver label{width:130px}
.sel{position:relative;display:block;height:25px}
.sel select{appearance:none;width:100%;height:25px;border:1px solid #b0b3b6;border-radius:0;background:linear-gradient(#b0b3b6,#b0b3b6) right 14px top/1px 100% no-repeat #f9f9fa;font:inherit;color:#444;padding:0 7px;opacity:1}
.sel cx-icon{position:absolute;right:5px;top:11px;color:#555}
.ver .sel{width:73px}
.tabs{display:flex;margin-top:6px}
.tabs button{height:25px;color:#777;border:1px solid #c4c8cb;border-width:1px 1px 0 0;width:44px}
.tabs .w{width:52px}
.tabs .on{width:44px;color:#111;background:#fbfbfb;border-left-width:1px;height:26px;margin-bottom:-1px;z-index:1}
.panel{border:1px solid #c4c8cb;background:#fbfbfb;padding:10px 14px 10px 10px}
.g{margin-bottom:14px}
.g.far{margin-top:22px;margin-bottom:9px}
.g.last{margin:0 0 6px}
.g>span{display:block;line-height:16px;margin-left:-2px}
.g.in>span{margin-left:5px}
.g.mid>span{margin-left:11px}
.row{display:flex;align-items:center;height:21px;gap:7px}
input[type=radio],input[type=checkbox]{appearance:none;width:12px;height:12px;margin:0;border:1px solid #666;background:#fff;flex:none}
input[type=radio]{border-radius:50%}
input[type=radio]:checked{background:radial-gradient(circle,#333 0 2.500px,#fff 3.500px)}
.off,.off label{color:#aaa}
.off input[type=checkbox]{border-color:#ccc}
.tick{position:relative;display:flex}
.tick svg{position:absolute;left:2px;top:2px}
.align{display:flex;align-items:center;gap:6px;margin:0 0 0 4px}
.align .sel{flex:1}
.align select{border-color:#cfd2d4;color:#aaa;background-image:linear-gradient(#cfd2d4,#cfd2d4)}
.align .sel cx-icon{color:#aaa}
.log{margin:8px 0 16px 2px}
footer{border-top:1px solid #c4c6c8;margin:0 1px;padding:10px 10px 11px;display:flex;justify-content:flex-end;align-items:center;gap:8px}
footer button{width:44px;height:25px;border:1px solid #b0b3b6;background:#f9f9fa;color:#333}
footer .ok{background:#9fdfff;border-color:#6cc8f8}
footer i{width:1px;height:25px;background:#999}
`, `<header><span></span><span>DWG 的导出环境</span><button aria-label="关闭">${ic('dlgclose')}</button></header>
<div class="content"><label class="name" for="fn">文件名</label><input type="text" id="fn" value="drw0002.dwg">
<div class="ver"><label for="v">DWG 版本:</label><span class="sel"><select id="v"><option>2013</option></select>${ic('caret')}</span></div>
<div class="tabs" role="tablist"><button class="on" role="tab">图元</button><button role="tab">页面</button><button class="w" role="tab">杂项</button><button role="tab">属性</button></div>
<div class="panel">
<div class="g in" role="radiogroup"><span>样条</span>${radio('sp','作为样条',1)}${radio('sp','作为折线')}</div>
<div class="g" role="radiogroup"><span>剖面线</span>${radio('ha','作为剖面线图元',1)}${radio('ha','作为分离图元')}</div>
<div class="g mid far" role="radiogroup"><span>点</span>${radio('pt','作为点',1)}${radio('pt','作为形状')}</div>
<div class="g last" role="radiogroup"><span>注解</span>${radio('nt','作为文本')}${radio('nt','勾画全部字符',1)}${radio('nt','勾画特殊字符')}
<div class="row off"><span class="tick"><input type="checkbox" id="mt" checked disabled><svg width="8" height="8" viewBox="0 0 8 8"><path d="M0 4l3 3 5-6" fill="none" stroke="#aaa" stroke-width="1.500"/></svg></span><label for="mt">导出多行注解作为 MTEXT</label></div></div>
<div class="align off"><label for="al">文本对齐</label><span class="sel"><select id="al" disabled><option>照原样</option></select>${ic('caret')}</span></div>
</div>
<div class="row log"><input type="checkbox" id="lg"><label for="lg">打开日志窗口</label></div></div>
<footer><button>导出</button><i></i><button class="ok">确定</button><button>取消</button></footer>`);

def('creo-app', `
:host{display:flex;flex-direction:column;height:100vh;border:4px solid #a2a2a2;position:relative}
main{display:flex;flex:1;min-height:0}
.work{flex:1;display:flex;flex-direction:column;min-width:0}
export-dialog{position:absolute;left:468px;top:226px}
water-mark{position:absolute;right:1px;bottom:0}
`, `<title-bar></title-bar><ribbon-tabs></ribbon-tabs><cx-ribbon></cx-ribbon>
<main><side-panel></side-panel><div class="work"><drawing-canvas></drawing-canvas><page-tabs></page-tabs></div></main>
<status-bar></status-bar><export-dialog role="dialog"></export-dialog><water-mark></water-mark>`);
</script>
</body>
</html>
